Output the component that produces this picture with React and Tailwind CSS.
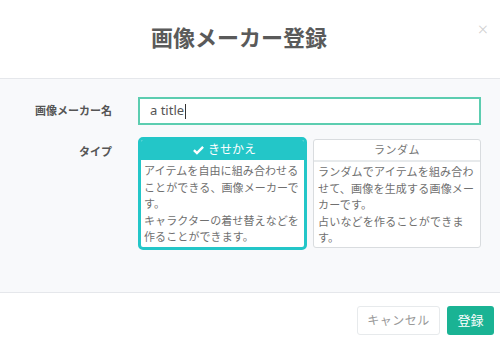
import React from "react";

export default function App() {
  const font = { fontFamily: '"Noto Sans", "Noto Sans CJK JP", sans-serif' };
  return (
    <div className="w-[500px] h-[346px] bg-white flex flex-col overflow-hidden" style={font}>
      {/* header */}
      <div className="relative h-[79px] flex items-center justify-center border-b border-[#e5e7eb] pr-[22px]">
        <h1 className="text-[22px] font-bold text-[#5a5a5a] leading-none -mt-[5px]">画像メーカー登録</h1>
        <span className="absolute right-[12px] top-[20px] text-[#d0d0d0] text-[18px] leading-none font-light">×</span>
      </div>
      {/* body */}
      <div className="h-[214px] bg-[#f8f9fb] border-b border-[#e5e7eb] pt-[18px] pr-[19px]">
        <div className="flex items-center">
          <div className="w-[113px] text-right text-[11px] font-bold text-[#555555] pr-[1px]">画像メーカー名</div>
          <div className="ml-[25px] flex-1 h-[28px] bg-white border-2 border-[#5ccdb0] flex items-center pl-[10px] text-[13px] text-[#555555]">
            a title<span className="inline-block w-[1px] h-[15px] bg-[#333] ml-[1px]" />
          </div>
        </div>
        <div className="flex mt-[12px]">
          <div className="w-[113px] text-right text-[11px] font-bold text-[#555555] pt-[7px] pr-[1px]">タイプ</div>
          <div className="ml-[25px] flex-1 flex gap-[6px]">
            <div className="w-[169px] h-[113px] border-[3px] border-[#23c6c8] rounded-[5px] bg-white overflow-hidden flex flex-col">
              <div className="h-[21px] bg-[#23c6c8] flex items-center justify-center text-white text-[12px] gap-[4px] -mt-[1px] pl-[4px]">
                <svg width="11" height="10" viewBox="0 0 12 10"><path d="M1 5.2 L4.3 8.3 L11 1.5" fill="none" stroke="white" strokeWidth="2.6" /></svg>
                <span>きせかえ</span>
              </div>
              <div className="px-[3px] pt-[3px] text-[11px] leading-[16.5px] text-[#707070] tracking-[0.1px] whitespace-nowrap">
                アイテムを自由に組み合わせる<br />ことができる、画像メーカーで<br />す。<br />キャラクターの着せ替えなどを<br />作ることができます。
              </div>
            </div>
            <div className="w-[168px] h-[109px] mt-[2px] border border-[#d9dcdf] rounded-[3px] bg-white overflow-hidden flex flex-col">
              <div className="h-[22px] border-b-2 border-[#e7eaec] flex items-center justify-center text-[#777777] text-[11px] tracking-[0.5px]">ランダム</div>
              <div className="px-[4px] pt-[2px] text-[11px] leading-[16.5px] text-[#707070] tracking-[0.2px] whitespace-nowrap">
                ランダムでアイテムを組み合わ<br />せて、画像を生成する画像メー<br />カーです。<br />占いなどを作ることができま<br />す。
              </div>
            </div>
          </div>
        </div>
      </div>
      {/* footer */}
      <div className="flex-1 flex justify-end items-start pt-[13px] pr-[6px] gap-[7px]">
        <button className="w-[83px] h-[29px] bg-white border border-[#e7eaec] rounded-[3px] text-[12px] text-[#999999] tracking-[0.5px]">キャンセル</button>
        <button className="w-[47px] h-[29px] bg-[#1ab394] rounded-[3px] text-[13px] text-white">登録</button>
      </div>
    </div>
  );
}
